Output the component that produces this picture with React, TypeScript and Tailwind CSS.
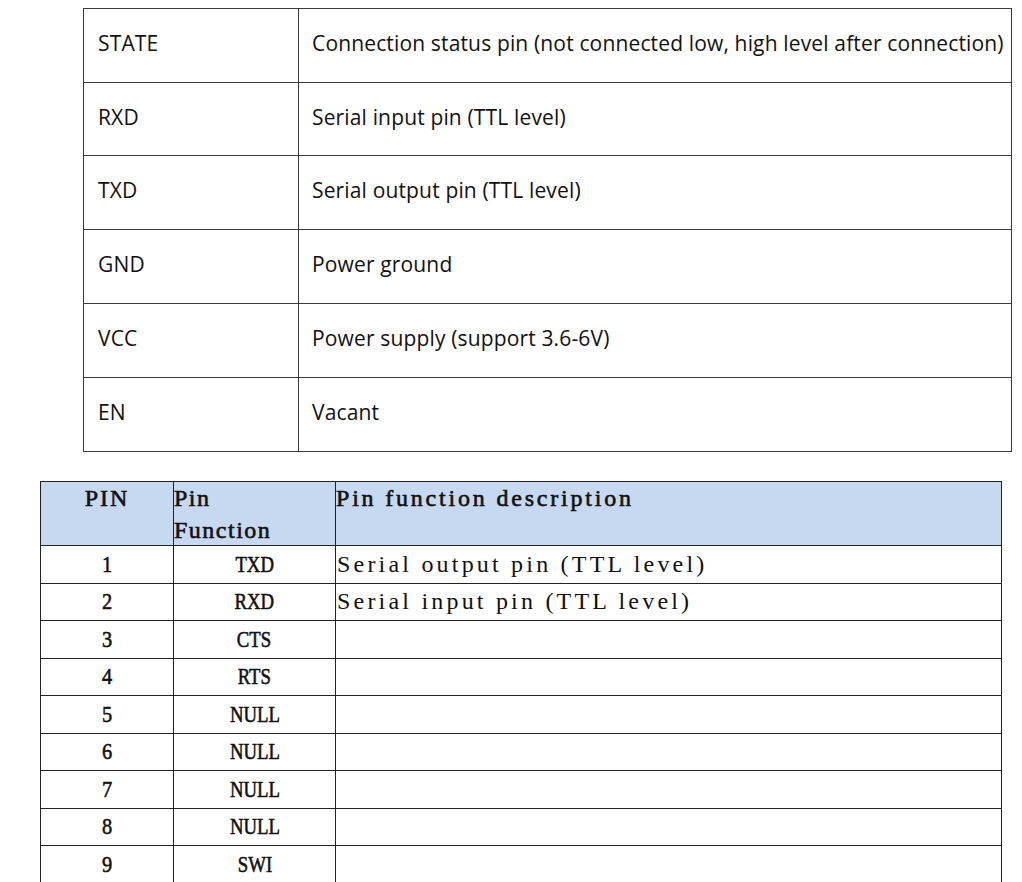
const pins = [
  { name: "STATE", desc: "Connection status pin (not connected low, high level after connection)", h: "h-[74px]" },
  { name: "RXD", desc: "Serial input pin (TTL level)", h: "h-[73px]" },
  { name: "TXD", desc: "Serial output pin (TTL level)", h: "h-[74px]" },
  { name: "GND", desc: "Power ground", h: "h-[74px]" },
  { name: "VCC", desc: "Power supply (support 3.6-6V)", h: "h-[74px]" },
  { name: "EN", desc: "Vacant", h: "h-[73px]" },
];

const rows = [
  { pin: "1", fn: "TXD", desc: "Serial output pin (TTL level)" },
  { pin: "2", fn: "RXD", desc: "Serial input pin (TTL level)" },
  { pin: "3", fn: "CTS", desc: "" },
  { pin: "4", fn: "RTS", desc: "" },
  { pin: "5", fn: "NULL", desc: "" },
  { pin: "6", fn: "NULL", desc: "" },
  { pin: "7", fn: "NULL", desc: "" },
  { pin: "8", fn: "NULL", desc: "" },
  { pin: "9", fn: "SWI", desc: "" },
];

const serif = "font-['Liberation_Serif','Noto_Sans_CJK_SC',serif]";
const heavy = "[-webkit-text-stroke:0.6px_#111]";

export default function App() {
  return (
    <div className="min-h-[882px] bg-white pt-[8px] text-[#111]">
      {/* Module pin table */}
      <div className="ml-[83px] w-[929px] border border-[#3a3a3a] font-['Open_Sans','Lato',sans-serif] text-[21px] tracking-[0.15px]">
        {pins.map((p, i) => (
          <div
            key={p.name}
            className={`flex ${p.h} ${i < pins.length - 1 ? "border-b border-[#3a3a3a]" : ""}`}
          >
            <div className="flex w-[215px] shrink-0 items-center border-r border-[#3a3a3a] pb-[3px] pl-[14px]">
              {p.name}
            </div>
            <div className="flex flex-1 items-center whitespace-nowrap pb-[3px] pl-[13px]">{p.desc}</div>
          </div>
        ))}
      </div>

      {/* Pin function table */}
      <div className={`ml-[40px] mt-[29px] w-[962px] border-x border-t border-[#222] ${serif} text-[24px]`}>
        <div className={`flex h-[64px] border-b border-[#222] bg-[#c6d9f0] leading-[32px] ${heavy}`}>
          <div className="w-[133px] shrink-0 border-r border-[#222] text-center tracking-[2px]">PIN</div>
          <div className="w-[162px] shrink-0 border-r border-[#222] tracking-[1.5px]">
            Pin
            <br />
            Function
          </div>
          <div className="flex-1 tracking-[2.8px]">Pin function description</div>
        </div>
        {rows.map((r, i) => (
          <div
            key={r.pin}
            className={`flex border-b border-[#222] ${i % 2 === 0 ? "h-[38px]" : "h-[37px]"}`}
          >
            <div className={`flex w-[133px] shrink-0 items-center justify-center border-r border-[#222] pb-[2px] ${heavy}`}>
              <span className="inline-block scale-x-[0.85]">{r.pin}</span>
            </div>
            <div className={`flex w-[162px] shrink-0 items-center justify-center border-r border-[#222] pb-[2px] ${heavy}`}>
              <span className="inline-block scale-x-[0.78]">{r.fn}</span>
            </div>
            <div className="flex flex-1 items-center whitespace-nowrap pb-[2px] pl-[1px] tracking-[3.2px]">{r.desc}</div>
          </div>
        ))}
      </div>
    </div>
  );
}
